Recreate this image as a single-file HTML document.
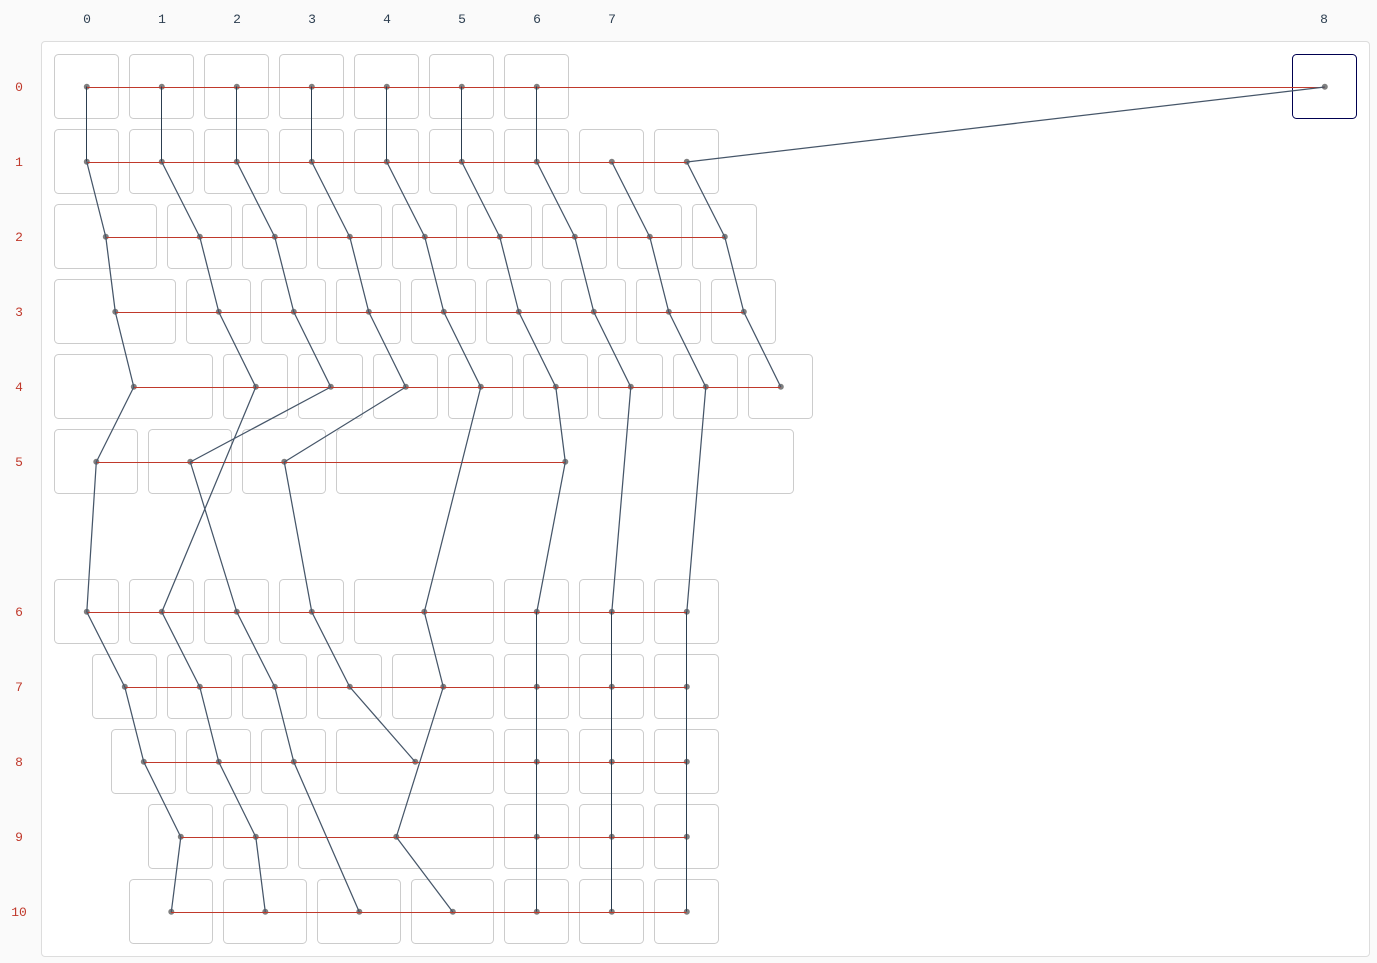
<!DOCTYPE html>
<html><head><meta charset="utf-8"><style>
html,body{margin:0;padding:0;background:#fafafa;width:1377px;height:963px;overflow:hidden}
#p{position:absolute;left:41px;top:41px;width:1327px;height:914px;background:#fff;border:1px solid #ddd;border-radius:4px}
svg{position:absolute;left:0;top:0}
.l{position:absolute;font:13px/16px "Liberation Mono",monospace;text-align:center;width:40px}
.c{top:12px;color:#2c3e50}
.r{left:-1px;color:#c0392b}
</style></head><body>
<div id="p"></div>
<svg width="1377" height="963" fill="none">
<g stroke="#ccc">
<rect x="54.5" y="54.5" width="64" height="64" rx="4"/><rect x="129.5" y="54.5" width="64" height="64" rx="4"/><rect x="204.5" y="54.5" width="64" height="64" rx="4"/><rect x="279.5" y="54.5" width="64" height="64" rx="4"/><rect x="354.5" y="54.5" width="64" height="64" rx="4"/><rect x="429.5" y="54.5" width="64" height="64" rx="4"/><rect x="504.5" y="54.5" width="64" height="64" rx="4"/>
<rect x="54.5" y="129.5" width="64" height="64" rx="4"/><rect x="129.5" y="129.5" width="64" height="64" rx="4"/><rect x="204.5" y="129.5" width="64" height="64" rx="4"/><rect x="279.5" y="129.5" width="64" height="64" rx="4"/><rect x="354.5" y="129.5" width="64" height="64" rx="4"/><rect x="429.5" y="129.5" width="64" height="64" rx="4"/><rect x="504.5" y="129.5" width="64" height="64" rx="4"/><rect x="579.5" y="129.5" width="64" height="64" rx="4"/><rect x="654.5" y="129.5" width="64" height="64" rx="4"/>
<rect x="54.5" y="204.5" width="102" height="64" rx="4"/><rect x="167.5" y="204.5" width="64" height="64" rx="4"/><rect x="242.5" y="204.5" width="64" height="64" rx="4"/><rect x="317.5" y="204.5" width="64" height="64" rx="4"/><rect x="392.5" y="204.5" width="64" height="64" rx="4"/><rect x="467.5" y="204.5" width="64" height="64" rx="4"/><rect x="542.5" y="204.5" width="64" height="64" rx="4"/><rect x="617.5" y="204.5" width="64" height="64" rx="4"/><rect x="692.5" y="204.5" width="64" height="64" rx="4"/>
<rect x="54.5" y="279.5" width="121" height="64" rx="4"/><rect x="186.5" y="279.5" width="64" height="64" rx="4"/><rect x="261.5" y="279.5" width="64" height="64" rx="4"/><rect x="336.5" y="279.5" width="64" height="64" rx="4"/><rect x="411.5" y="279.5" width="64" height="64" rx="4"/><rect x="486.5" y="279.5" width="64" height="64" rx="4"/><rect x="561.5" y="279.5" width="64" height="64" rx="4"/><rect x="636.5" y="279.5" width="64" height="64" rx="4"/><rect x="711.5" y="279.5" width="64" height="64" rx="4"/>
<rect x="54.5" y="354.5" width="158" height="64" rx="4"/><rect x="223.5" y="354.5" width="64" height="64" rx="4"/><rect x="298.5" y="354.5" width="64" height="64" rx="4"/><rect x="373.5" y="354.5" width="64" height="64" rx="4"/><rect x="448.5" y="354.5" width="64" height="64" rx="4"/><rect x="523.5" y="354.5" width="64" height="64" rx="4"/><rect x="598.5" y="354.5" width="64" height="64" rx="4"/><rect x="673.5" y="354.5" width="64" height="64" rx="4"/><rect x="748.5" y="354.5" width="64" height="64" rx="4"/>
<rect x="54.5" y="429.5" width="83" height="64" rx="4"/><rect x="148.5" y="429.5" width="83" height="64" rx="4"/><rect x="242.5" y="429.5" width="83" height="64" rx="4"/><rect x="336.5" y="429.5" width="457" height="64" rx="4"/>
<rect x="54.5" y="579.5" width="64" height="64" rx="4"/><rect x="129.5" y="579.5" width="64" height="64" rx="4"/><rect x="204.5" y="579.5" width="64" height="64" rx="4"/><rect x="279.5" y="579.5" width="64" height="64" rx="4"/><rect x="354.5" y="579.5" width="139" height="64" rx="4"/><rect x="504.5" y="579.5" width="64" height="64" rx="4"/><rect x="579.5" y="579.5" width="64" height="64" rx="4"/><rect x="654.5" y="579.5" width="64" height="64" rx="4"/>
<rect x="92.5" y="654.5" width="64" height="64" rx="4"/><rect x="167.5" y="654.5" width="64" height="64" rx="4"/><rect x="242.5" y="654.5" width="64" height="64" rx="4"/><rect x="317.5" y="654.5" width="64" height="64" rx="4"/><rect x="392.5" y="654.5" width="101" height="64" rx="4"/><rect x="504.5" y="654.5" width="64" height="64" rx="4"/><rect x="579.5" y="654.5" width="64" height="64" rx="4"/><rect x="654.5" y="654.5" width="64" height="64" rx="4"/>
<rect x="111.5" y="729.5" width="64" height="64" rx="4"/><rect x="186.5" y="729.5" width="64" height="64" rx="4"/><rect x="261.5" y="729.5" width="64" height="64" rx="4"/><rect x="336.5" y="729.5" width="157" height="64" rx="4"/><rect x="504.5" y="729.5" width="64" height="64" rx="4"/><rect x="579.5" y="729.5" width="64" height="64" rx="4"/><rect x="654.5" y="729.5" width="64" height="64" rx="4"/>
<rect x="148.5" y="804.5" width="64" height="64" rx="4"/><rect x="223.5" y="804.5" width="64" height="64" rx="4"/><rect x="298.5" y="804.5" width="195" height="64" rx="4"/><rect x="504.5" y="804.5" width="64" height="64" rx="4"/><rect x="579.5" y="804.5" width="64" height="64" rx="4"/><rect x="654.5" y="804.5" width="64" height="64" rx="4"/>
<rect x="129.5" y="879.5" width="83" height="64" rx="4"/><rect x="223.5" y="879.5" width="83" height="64" rx="4"/><rect x="317.5" y="879.5" width="83" height="64" rx="4"/><rect x="411.5" y="879.5" width="82" height="64" rx="4"/><rect x="504.5" y="879.5" width="64" height="64" rx="4"/><rect x="579.5" y="879.5" width="64" height="64" rx="4"/><rect x="654.5" y="879.5" width="64" height="64" rx="4"/>
</g>
<rect x="1292.5" y="54.5" width="64" height="64" rx="4" stroke="#000050"/>
<path transform="translate(.3 .3)" stroke="#808080" stroke-width="6" stroke-linecap="round" d="
M86.5 86.5h0M161.5 86.5h0M236.5 86.5h0M311.5 86.5h0M386.5 86.5h0M461.5 86.5h0M536.5 86.5h0M1324.5 86.5h0
M86.5 161.5h0M161.5 161.5h0M236.5 161.5h0M311.5 161.5h0M386.5 161.5h0M461.5 161.5h0M536.5 161.5h0M611.5 161.5h0M686.5 161.5h0
M105.5 236.5h0M199.5 236.5h0M274.5 236.5h0M349.5 236.5h0M424.5 236.5h0M499.5 236.5h0M574.5 236.5h0M649.5 236.5h0M724.5 236.5h0
M115 311.5h0M218.5 311.5h0M293.5 311.5h0M368.5 311.5h0M443.5 311.5h0M518.5 311.5h0M593.5 311.5h0M668.5 311.5h0M743.5 311.5h0
M133.5 386.5h0M255.5 386.5h0M330.5 386.5h0M405.5 386.5h0M480.5 386.5h0M555.5 386.5h0M630.5 386.5h0M705.5 386.5h0M780.5 386.5h0
M96 461.5h0M190 461.5h0M284 461.5h0M565 461.5h0
M86.5 611.5h0M161.5 611.5h0M236.5 611.5h0M311.5 611.5h0M424 611.5h0M536.5 611.5h0M611.5 611.5h0M686.5 611.5h0
M124.5 686.5h0M199.5 686.5h0M274.5 686.5h0M349.5 686.5h0M443 686.5h0M536.5 686.5h0M611.5 686.5h0M686.5 686.5h0
M143.5 761.5h0M218.5 761.5h0M293.5 761.5h0M415 761.5h0M536.5 761.5h0M611.5 761.5h0M686.5 761.5h0
M180.5 836.5h0M255.5 836.5h0M396 836.5h0M536.5 836.5h0M611.5 836.5h0M686.5 836.5h0
M171 911.5h0M265 911.5h0M359 911.5h0M452.5 911.5h0M536.5 911.5h0M611.5 911.5h0M686.5 911.5h0"/>
<path stroke="#c0392b" d="M86.5 87.5H1324.5M86.5 162.5H686.5M105.5 237.5H724.5M115 312.5H743.5M133.5 387.5H780.5M96 462.5H565M86.5 612.5H686.5M124.5 687.5H686.5M143.5 762.5H686.5M180.5 837.5H686.5M171 912.5H686.5"/>
<path stroke="#2c3e50" d="M86.5 86.5V161.5M161.5 86.5V161.5M236.5 86.5V161.5M311.5 86.5V161.5M386.5 86.5V161.5M461.5 86.5V161.5M536.5 86.5V161.5
M536.5 611.5V911.5M611.5 611.5V911.5M686.5 611.5V911.5"/>
<path transform="translate(.3 .5)" stroke="#465669" stroke-width="1.25" d="
M1324.5 86.5L686.5 161.5
M86.5 161.5L105.5 236.5M161.5 161.5L199.5 236.5M236.5 161.5L274.5 236.5M311.5 161.5L349.5 236.5M386.5 161.5L424.5 236.5M461.5 161.5L499.5 236.5M536.5 161.5L574.5 236.5M611.5 161.5L649.5 236.5M686.5 161.5L724.5 236.5
M105.5 236.5L115 311.5M199.5 236.5L218.5 311.5M274.5 236.5L293.5 311.5M349.5 236.5L368.5 311.5M424.5 236.5L443.5 311.5M499.5 236.5L518.5 311.5M574.5 236.5L593.5 311.5M649.5 236.5L668.5 311.5M724.5 236.5L743.5 311.5
M115 311.5L133.5 386.5M218.5 311.5L255.5 386.5M293.5 311.5L330.5 386.5M368.5 311.5L405.5 386.5M443.5 311.5L480.5 386.5M518.5 311.5L555.5 386.5M593.5 311.5L630.5 386.5M668.5 311.5L705.5 386.5M743.5 311.5L780.5 386.5
M133.5 386.5L96 461.5M255.5 386.5L161.5 611.5M330.5 386.5L190 461.5M405.5 386.5L284 461.5M480.5 386.5L424 611.5M555.5 386.5L565 461.5M630.5 386.5L611.5 611.5M705.5 386.5L686.5 611.5
M96 461.5L86.5 611.5M190 461.5L236.5 611.5M284 461.5L311.5 611.5M565 461.5L536.5 611.5
M86.5 611.5L124.5 686.5M161.5 611.5L199.5 686.5M236.5 611.5L274.5 686.5M311.5 611.5L349.5 686.5M424 611.5L443 686.5
M124.5 686.5L143.5 761.5M199.5 686.5L218.5 761.5M274.5 686.5L293.5 761.5M349.5 686.5L415 761.5M443 686.5L396 836.5
M143.5 761.5L180.5 836.5M218.5 761.5L255.5 836.5M293.5 761.5L359 911.5
M180.5 836.5L171 911.5M255.5 836.5L265 911.5M396 836.5L452.5 911.5"/>
</svg>
<div class="l c" style="left:67px">0</div><div class="l c" style="left:142px">1</div><div class="l c" style="left:217px">2</div><div class="l c" style="left:292px">3</div><div class="l c" style="left:367px">4</div><div class="l c" style="left:442px">5</div><div class="l c" style="left:517px">6</div><div class="l c" style="left:592px">7</div><div class="l c" style="left:1304px">8</div>
<div class="l r" style="top:80px">0</div><div class="l r" style="top:155px">1</div><div class="l r" style="top:230px">2</div><div class="l r" style="top:305px">3</div><div class="l r" style="top:380px">4</div><div class="l r" style="top:455px">5</div><div class="l r" style="top:605px">6</div><div class="l r" style="top:680px">7</div><div class="l r" style="top:755px">8</div><div class="l r" style="top:830px">9</div><div class="l r" style="top:905px">10</div>
</body></html>
